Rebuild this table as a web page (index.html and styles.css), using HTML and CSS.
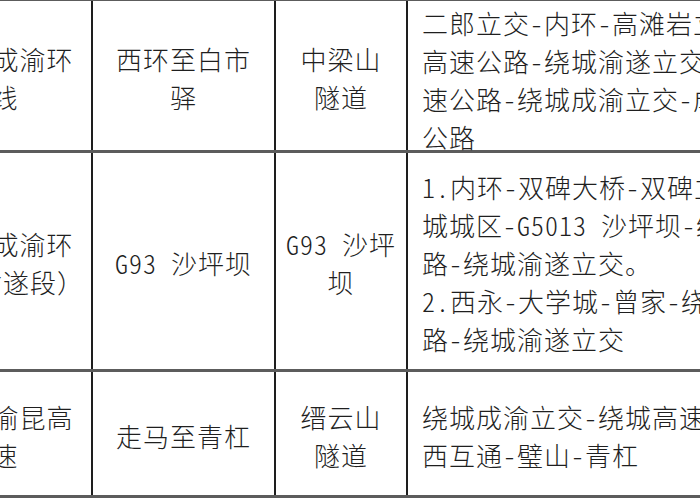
FILE: index.html
```html
<!DOCTYPE html>
<html lang="zh-CN">
<head>
<meta charset="utf-8">
<title>绕行路线</title>
<link rel="stylesheet" href="styles.css">
</head>
<body>
<table class="routes">
  <colgroup>
    <col class="c-road">
    <col class="c-section">
    <col class="c-tunnel">
    <col class="c-detour">
  </colgroup>
  <tbody>
    <tr class="row-a">
      <td>G93 成渝环<br>线</td>
      <td>西环至白市<br>驿</td>
      <td>中梁山<br>隧道</td>
      <td class="detour detour-top"><div class="spill">二郎立交-内环-高滩岩立交-成渝<br>高速公路-绕城渝遂立交-绕城高<br>速公路-绕城成渝立交-成渝高速<br>公路</div></td>
    </tr>
    <tr class="row-b">
      <td>G93 成渝环<br><span class="wide-line">线（渝遂段）</span></td>
      <td>G93 沙坪坝</td>
      <td>G93 沙坪<br>坝</td>
      <td class="detour">1.内环-双碑大桥-双碑立交-北<br>城城区-G5013 沙坪坝-绕城高速公<br>路-绕城渝遂立交。<br>2.西永-大学城-曾家-绕城高速公<br>路-绕城渝遂立交</td>
    </tr>
    <tr class="row-c">
      <td>G85 渝昆高<br>速</td>
      <td>走马至青杠</td>
      <td>缙云山<br>隧道</td>
      <td class="detour">绕城成渝立交-绕城高速公路-<br>西互通-璧山-青杠</td>
    </tr>
  </tbody>
</table>
</body>
</html>
```

FILE: styles.css
```css
html, body {
  margin: 0;
  padding: 0;
  background: #ffffff;
}

body {
  width: 700px;
  height: 500px;
  overflow: hidden;
  font-family: "Noto Sans CJK SC", "Noto Sans", sans-serif;
  font-size: 26px;
  font-weight: 300;
  letter-spacing: 1px;
  color: #1f1f1f;
  font-feature-settings: "hwid" 1;
}

.routes {
  border-collapse: collapse;
  table-layout: fixed;
  width: 900px;
  margin: -2px 0 0 -83px;
}

.c-road { width: 174px; }
.c-section { width: 183px; }
.c-tunnel { width: 132px; }
.c-detour { width: 411px; }

.routes td {
  border-left: 2px solid #1e1e1e;
  border-right: 2px solid #1e1e1e;
  border-top: 3px solid #5c5c5c;
  border-bottom: 3px solid #5c5c5c;
  padding: 4px 6px 0;
  line-height: 38px;
  text-align: center;
  vertical-align: middle;
  white-space: nowrap;
}

.row-a { height: 152px; }
.row-b { height: 219px; }
.row-c { height: 126px; }

.routes td.detour {
  text-align: left;
  padding-left: 14px;
}

.routes td.detour-top {
  vertical-align: top;
  padding-top: 3px;
}

.spill {
  height: 120px;
}

.wide-line {
  display: inline-block;
  margin-left: -4px;
  font-feature-settings: normal;
}
```
